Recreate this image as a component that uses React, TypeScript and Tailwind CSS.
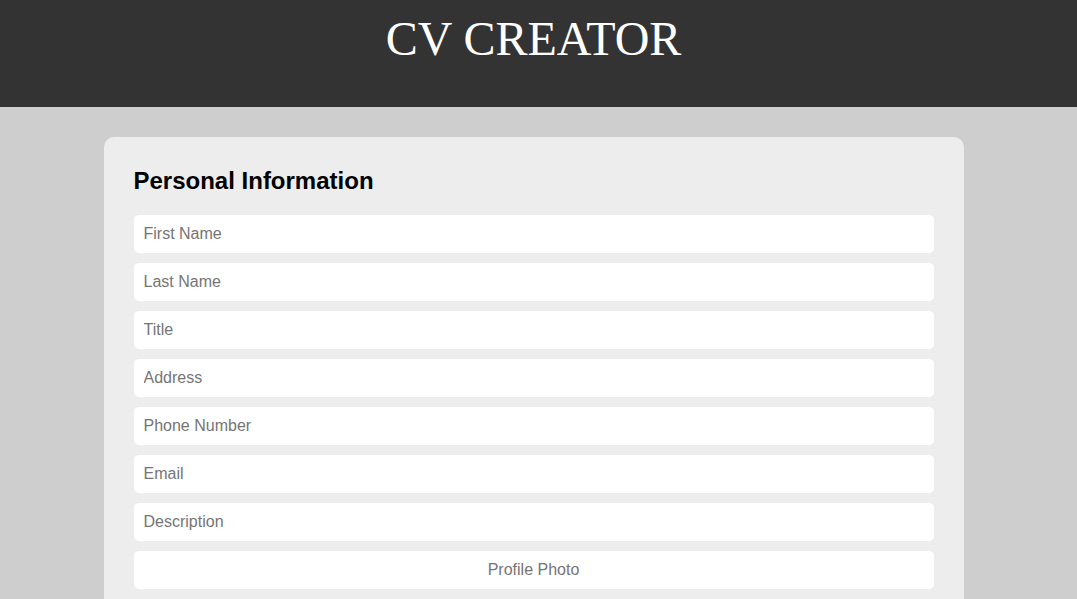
import React from 'react';

const fields = ['First Name', 'Last Name', 'Title', 'Address', 'Phone Number', 'Email', 'Description'];

export default function App() {
    return (
        <div className="min-h-screen bg-[#cecece] pr-[10px] font-['Liberation_Sans',Arial,sans-serif]">
            {/* Header */}
            <header className="h-[107px] bg-[#333333] -mr-[10px] pr-[10px]">
                <h1 className="pt-[11px] text-center text-[48px] leading-[55px] text-white font-['Liberation_Serif','Times_New_Roman',serif]">
                    CV CREATOR
                </h1>
            </header>

            {/* Form */}
            <main className="pt-[30px]">
                <section className="mx-auto w-[860px] rounded-[10px] bg-[#ededed] px-[30px] pt-[30px] pb-[30px]">
                    <h2 className="mb-[21px] text-[24px] leading-[27px] font-bold text-black">Personal Information</h2>
                    <div className="flex flex-col gap-[10px]">
                        {fields.map((f) => (
                            <input
                                key={f}
                                type="text"
                                placeholder={f}
                                className="h-[38px] w-full rounded-[5px] bg-white px-[10px] text-[16px] text-black placeholder:text-[#757575] outline-none"
                            />
                        ))}
                        <label className="flex h-[38px] w-full items-center justify-center rounded-[5px] bg-white text-[16px] text-[#757575]">
                            Profile Photo
                            <input type="file" className="hidden" />
                        </label>
                    </div>
                </section>
            </main>
        </div>
    );
}
